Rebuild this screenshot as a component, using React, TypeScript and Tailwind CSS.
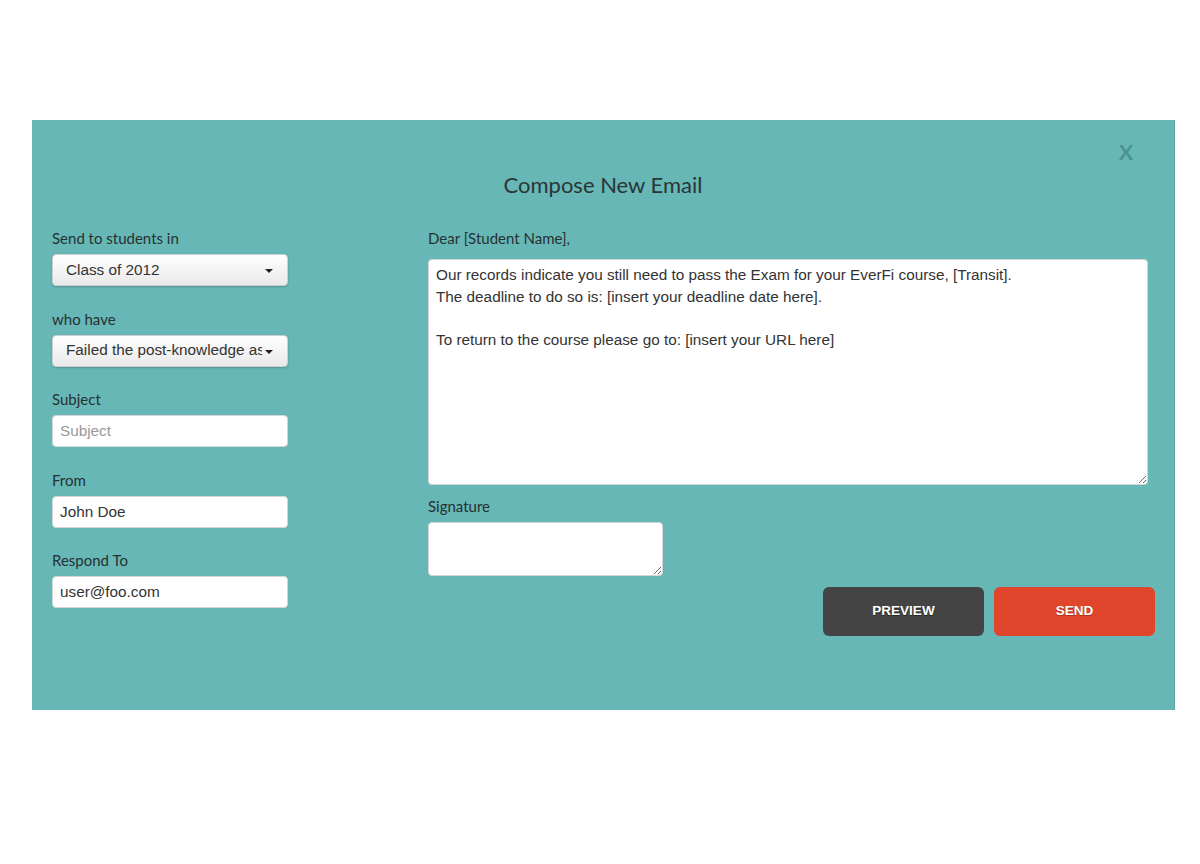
import { useState } from 'react';

const labelCls = "h-[20px] text-[15px] leading-[20px] text-[#263131] font-['Lato',sans-serif]";
const fieldFont = "font-['Liberation_Sans',Arial,sans-serif] text-[15.3px] text-[#333]";

function FakeSelect({ value }: { value: string }) {
    return (
        <div className="relative mt-[6px] flex h-[32px] w-[236px] items-center rounded-[4px] border border-[#cfcfcf] bg-gradient-to-b from-white to-[#e9e9e9] shadow-[0_1px_2px_rgba(0,0,0,0.2)]">
            <div className={`${fieldFont} ml-[13px] w-[196px] overflow-hidden whitespace-nowrap`}>{value}</div>
            <span className="absolute right-[14px] top-[14px] h-0 w-0 border-x-[4px] border-t-[4px] border-x-transparent border-t-[#222]" />
        </div>
    );
}

function TextInput({ value, placeholder }: { value: string; placeholder?: string }) {
    const [v, setV] = useState(value);
    return (
        <input
            value={v}
            placeholder={placeholder}
            onChange={(e) => setV(e.target.value)}
            className={`${fieldFont} mt-[6px] block h-[32px] w-[236px] rounded-[4px] border border-[#d6d6d6] bg-white px-[7px] outline-none placeholder:text-[#999]`}
        />
    );
}

const body = `Our records indicate you still need to pass the Exam for your EverFi course, [Transit].
The deadline to do so is: [insert your deadline date here].

To return to the course please go to: [insert your URL here]`;

export default function App() {
    const [message, setMessage] = useState(body);
    const [signature, setSignature] = useState('');

    return (
        <div className="min-h-[864px] w-[1200px] bg-white pt-[120px] pl-[32px]">
            <div className="relative h-[590px] w-[1143px] border-r border-[#5aa6a6] bg-[#67b7b7]">
                <button className="absolute right-[41px] top-[18px] font-['Lato',sans-serif] text-[21px] font-bold leading-[28px] text-[#4d9191]">
                    X
                </button>

                <h1 className="pt-[51px] text-center font-['Lato',sans-serif] text-[22px] leading-[28px] text-[#2a3535]">
                    Compose New Email
                </h1>

                <div className="mt-[29px] flex pl-[20px]">
                    {/* left column */}
                    <div className="flex w-[236px] flex-col gap-[22.5px]">
                        <div>
                            <div className={labelCls}>Send to students in</div>
                            <FakeSelect value="Class of 2012" />
                        </div>
                        <div>
                            <div className={labelCls}>who have</div>
                            <FakeSelect value="Failed the post-knowledge assessment" />
                        </div>
                        <div>
                            <div className={labelCls}>Subject</div>
                            <TextInput value="" placeholder="Subject" />
                        </div>
                        <div>
                            <div className={labelCls}>From</div>
                            <TextInput value="John Doe" />
                        </div>
                        <div>
                            <div className={labelCls}>Respond To</div>
                            <TextInput value="user@foo.com" />
                        </div>
                    </div>

                    {/* right column */}
                    <div className="ml-[140px] flex w-[727px] flex-col">
                        <div className={labelCls}>Dear [Student Name],</div>
                        <textarea
                            value={message}
                            onChange={(e) => setMessage(e.target.value)}
                            className={`${fieldFont} mt-[11px] block h-[226px] w-[720px] rounded-[4px] border border-[#d6d6d6] bg-white px-[7px] pt-[4px] leading-[21.5px] outline-none`}
                        />
                        <div className={`${labelCls} mt-[11px]`}>Signature</div>
                        <textarea
                            value={signature}
                            onChange={(e) => setSignature(e.target.value)}
                            className={`${fieldFont} mt-[6px] block h-[54px] w-[235px] rounded-[4px] border border-[#d6d6d6] bg-white px-[7px] outline-none`}
                        />
                        <div className="mt-[11px] flex justify-end gap-[10px]">
                            <button className="h-[49px] w-[161px] rounded-[6px] bg-[#444444] font-['Liberation_Sans',Arial,sans-serif] text-[13.5px] font-bold text-white [text-shadow:0_1px_1px_rgba(0,0,0,0.5)]">
                                PREVIEW
                            </button>
                            <button className="h-[49px] w-[161px] rounded-[6px] bg-[#e0462c] font-['Liberation_Sans',Arial,sans-serif] text-[13.5px] font-bold text-white [text-shadow:0_1px_1px_rgba(0,0,0,0.3)]">
                                SEND
                            </button>
                        </div>
                    </div>
                </div>
            </div>
        </div>
    );
}
